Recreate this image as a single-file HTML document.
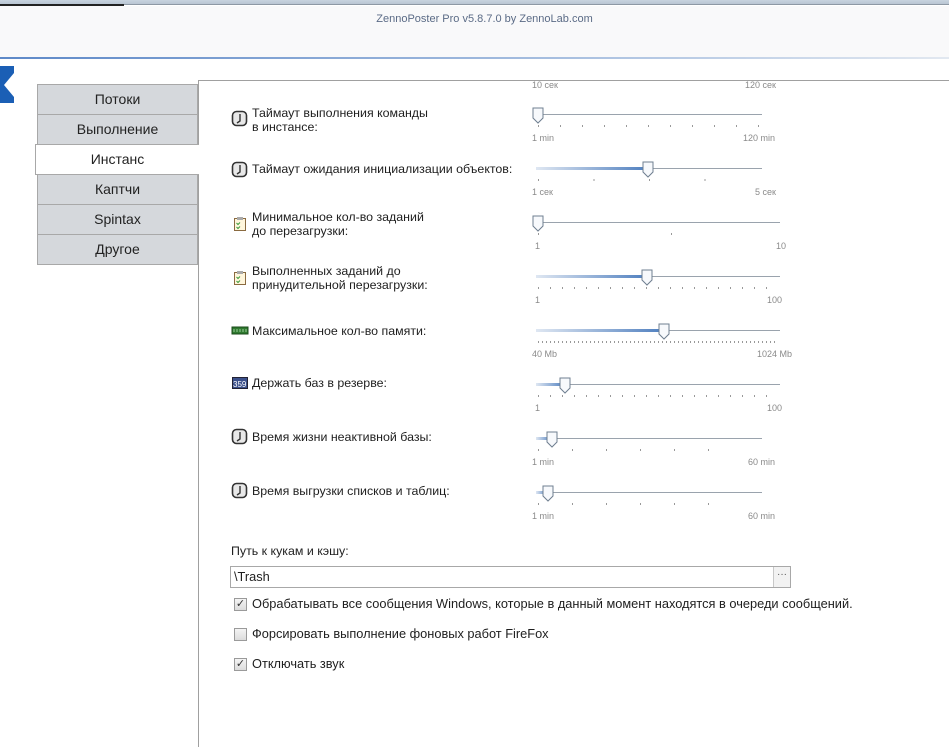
<!DOCTYPE html>
<html><head><meta charset="utf-8"><style>
*{margin:0;padding:0;box-sizing:border-box}
body{width:949px;height:747px;overflow:hidden;background:#fff;position:relative;font-family:"Liberation Sans",sans-serif;font-size:12px;color:#1e1e1e}
.abs{position:absolute}
.tab{position:absolute;left:37px;width:161px;height:31px;background:#d5d8dc;border:1px solid #a8a8a8;text-align:center;line-height:29px;font-size:14px;color:#222}
.lbl{position:absolute;left:252px;line-height:14px;font-size:12.4px;color:#1e1e1e}
.sm{position:absolute;font-size:9px;color:#8a8a8a;font-family:"Liberation Sans",sans-serif}
.cb{position:absolute;left:234px;width:13px;height:13px;border:1px solid #9a9a9a;background:linear-gradient(#f4f4f4,#dcdcdc);font-size:11px;line-height:11px;text-align:center;color:#333}
.ct{position:absolute;left:252px;font-size:12.8px;color:#1e1e1e}
.fill{position:absolute;left:536px;height:3px;background:linear-gradient(90deg,#dfe7f2,#4f7fbf)}
</style></head><body>
<div class="abs" style="left:0;top:0;width:949px;height:5px;background:linear-gradient(#c8d3de,#b5c2d0)"></div>
<div class="abs" style="left:0;top:4px;width:949px;height:1px;background:#8d98a4"></div>
<div class="abs" style="left:0;top:4px;width:124px;height:2px;background:#222"></div>
<div class="abs" style="left:0;top:6px;width:949px;height:51px;background:#f9f9fa"></div>
<div class="abs" style="left:0;top:13px;width:949px;text-align:center;font-size:11px;color:#5b6b86;padding-left:20px">ZennoPoster Pro v5.8.7.0 by ZennoLab.com</div>
<div class="abs" style="left:0;top:57px;width:949px;height:2px;background:linear-gradient(90deg,#5e89c8,#a9c0e0 60%,#e2e8f0)"></div>
<div class="abs" style="left:0;top:66px;width:14px;height:37px;background:#1b5fb5"></div>
<div class="abs" style="left:4px;top:73px;width:0;height:0;border-top:12px solid transparent;border-bottom:12px solid transparent;border-right:10px solid #fff"></div>
<div class="abs" style="left:198px;top:80px;width:751px;height:1px;background:#a0a0a0"></div>
<div class="abs" style="left:198px;top:80px;width:1px;height:667px;background:#a0a0a0"></div>
<div class="tab" style="top:84px">Потоки</div>
<div class="tab" style="top:114px">Выполнение</div>
<div class="tab" style="top:144px;left:35px;width:164px;background:#fff;border-right:none">Инстанс</div>
<div class="tab" style="top:174px">Каптчи</div>
<div class="tab" style="top:204px">Spintax</div>
<div class="tab" style="top:234px">Другое</div>

<div class="fill" style="top:167px;width:112px"></div>
<div class="fill" style="top:275px;width:111px"></div>
<div class="fill" style="top:329px;width:128px"></div>
<div class="fill" style="top:383px;width:29px"></div>
<div class="fill" style="top:437px;width:16px"></div>
<div class="fill" style="top:491px;width:12px"></div>

<svg class="abs" style="left:0;top:0" width="949" height="747">
<defs>
<g id="th"><path d="M-5,-6h10v10l-5,5l-5,-5z" fill="#f7f9fc" stroke="#6f7f90" stroke-width="1"/></g>
<g id="clk"><rect x="0.5" y="0.5" width="14" height="14" rx="4" fill="#e8e8e8" stroke="#333" stroke-width="1.6"/><path d="M8,3v7l-3,2" fill="none" stroke="#333" stroke-width="1.4"/></g>
<g id="clip"><rect x="1.5" y="2.5" width="11" height="12" fill="#fff6dc" stroke="#8a6a40"/><rect x="4" y="1" width="6" height="3" fill="#aaa"/><path d="M3.5,7l1.5,1.5l2,-2M3.5,11l1.5,1.5l2,-2" stroke="#3a9a3a" fill="none"/></g>
</defs>
<g stroke="#9aa3ad" stroke-width="1">
<line x1="536" y1="114.5" x2="762" y2="114.5"/>
<line x1="648" y1="168.5" x2="762" y2="168.5"/>
<line x1="536" y1="222.5" x2="780" y2="222.5"/>
<line x1="647" y1="276.5" x2="780" y2="276.5"/>
<line x1="664" y1="330.5" x2="780" y2="330.5"/>
<line x1="565" y1="384.5" x2="780" y2="384.5"/>
<line x1="552" y1="438.5" x2="762" y2="438.5"/>
<line x1="548" y1="492.5" x2="762" y2="492.5"/>
</g>
<g stroke="#999" stroke-width="2">
<line x1="538" y1="126" x2="760" y2="126" stroke-dasharray="1 21"/>
<line x1="538" y1="180" x2="760" y2="180" stroke-dasharray="1 54.5"/>
<line x1="538" y1="234" x2="672" y2="234" stroke-dasharray="1 132"/>
<line x1="538" y1="288" x2="778" y2="288" stroke-dasharray="1 11"/>
<line x1="538" y1="342" x2="778" y2="342" stroke-dasharray="1 3"/>
<line x1="538" y1="396" x2="778" y2="396" stroke-dasharray="1 11"/>
<line x1="538" y1="450" x2="710" y2="450" stroke-dasharray="1 33"/>
<line x1="538" y1="504" x2="710" y2="504" stroke-dasharray="1 33"/>
</g>
<use href="#th" x="538" y="114"/><use href="#th" x="648" y="168"/><use href="#th" x="538" y="222"/>
<use href="#th" x="647" y="276"/><use href="#th" x="664" y="330"/><use href="#th" x="565" y="384"/>
<use href="#th" x="552" y="438"/><use href="#th" x="548" y="492"/>
<use href="#clk" x="232" y="111"/><use href="#clk" x="232" y="162"/>
<use href="#clip" x="233" y="216"/><use href="#clip" x="233" y="270"/>
<rect x="232" y="327" width="16" height="7" fill="#2f7a2f" stroke="#1a4a1a"/>
<path d="M234,329v3M237,329v3M240,329v3M243,329v3M246,329v3" stroke="#9c9" />
<rect x="232.5" y="377.5" width="15" height="11" fill="#3a4f8a" stroke="#223"/>
<text x="233" y="387" font-size="8" fill="#fff" font-family="Liberation Sans">359</text>
<use href="#clk" x="232" y="429"/><use href="#clk" x="232" y="483"/>
</svg>

<div class="sm" style="left:532px;top:80px">10 сек</div><div class="sm" style="left:745px;top:80px">120 сек</div>
<div class="sm" style="left:532px;top:133px">1 min</div><div class="sm" style="left:743px;top:133px">120 min</div>
<div class="sm" style="left:532px;top:187px">1 сек</div><div class="sm" style="left:755px;top:187px">5 сек</div>
<div class="sm" style="left:535px;top:241px">1</div><div class="sm" style="left:776px;top:241px">10</div>
<div class="sm" style="left:535px;top:295px">1</div><div class="sm" style="left:767px;top:295px">100</div>
<div class="sm" style="left:532px;top:349px">40 Mb</div><div class="sm" style="left:757px;top:349px">1024 Mb</div>
<div class="sm" style="left:535px;top:403px">1</div><div class="sm" style="left:767px;top:403px">100</div>
<div class="sm" style="left:532px;top:457px">1 min</div><div class="sm" style="left:748px;top:457px">60 min</div>
<div class="sm" style="left:532px;top:511px">1 min</div><div class="sm" style="left:748px;top:511px">60 min</div>

<div class="lbl" style="top:106px">Таймаут выполнения команды<br>в инстансе:</div>
<div class="lbl" style="top:162px">Таймаут ожидания инициализации объектов:</div>
<div class="lbl" style="top:210px">Минимальное кол-во заданий<br>до перезагрузки:</div>
<div class="lbl" style="top:264px">Выполненных заданий до<br>принудительной перезагрузки:</div>
<div class="lbl" style="top:324px">Максимальное кол-во памяти:</div>
<div class="lbl" style="top:376px">Держать баз в резерве:</div>
<div class="lbl" style="top:430px">Время жизни неактивной базы:</div>
<div class="lbl" style="top:484px">Время выгрузки списков и таблиц:</div>

<div class="abs" style="left:231px;top:544px;font-size:12.4px">Путь к кукам и кэшу:</div>
<div class="abs" style="left:230px;top:566px;width:561px;height:22px;border:1px solid #a8a8a8;background:#fff"></div>
<div class="abs" style="left:234px;top:569px;font-size:12.8px">\Trash</div>
<div class="abs" style="left:773px;top:567px;width:17px;height:20px;border-left:1px solid #c8c8c8;background:#f2f2f2;text-align:center;font-size:10px;line-height:16px;color:#555">···</div>
<div class="cb" style="top:598px">✓</div><div class="ct" style="top:596px">Обрабатывать все сообщения Windows, которые в данный момент находятся в очереди сообщений.</div>
<div class="cb" style="top:628px"></div><div class="ct" style="top:626px">Форсировать выполнение фоновых работ FireFox</div>
<div class="cb" style="top:658px">✓</div><div class="ct" style="top:656px">Отключать звук</div>
</body></html>
